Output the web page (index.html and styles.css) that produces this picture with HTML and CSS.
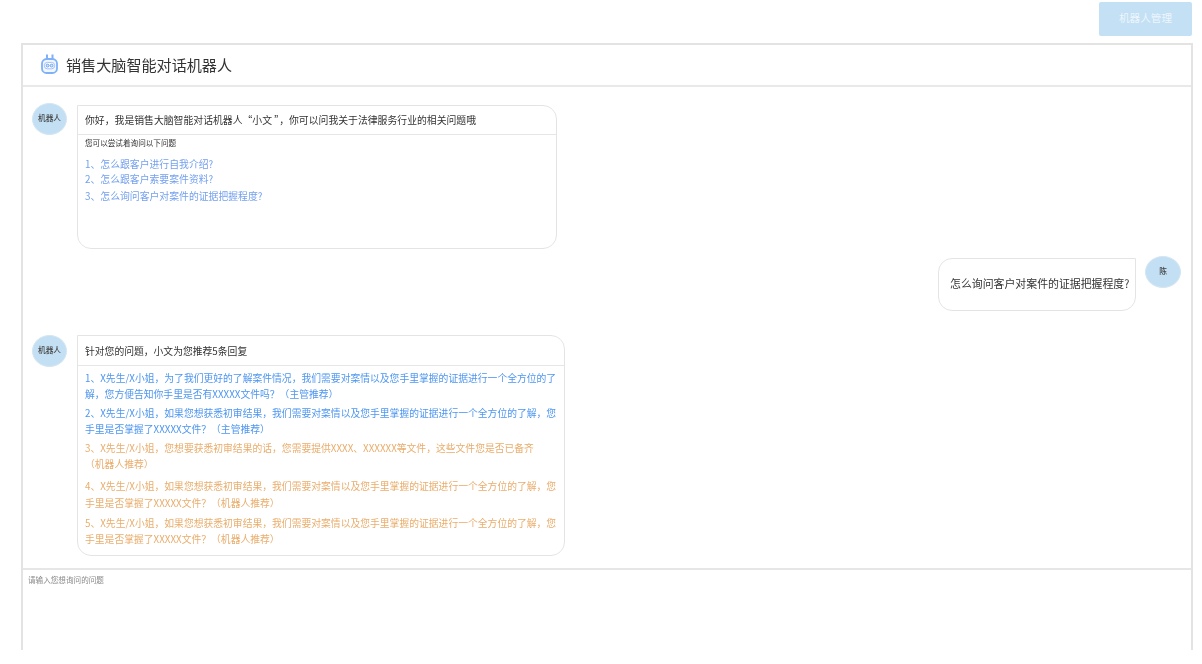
FILE: index.html
```html
<!DOCTYPE html>
<html lang="zh-CN">
<head>
<meta charset="utf-8">
<title>销售大脑智能对话机器人</title>
<link rel="stylesheet" href="styles.css">
</head>
<body>
<div class="page">
  <div class="topbar"><button class="manage">机器人管理</button></div>
  <section class="card">
    <header class="head">
      <svg class="logo" viewBox="0 0 17 21" width="17" height="21" fill="none" stroke="#7fb0f8" stroke-width="1.8">
        <rect x="1" y="6" width="15" height="14" rx="4.6" fill="#f2f7ff"/>
        <path d="M6 6V1.5M11.5 6V1.5" stroke-width="2"/>
        <rect x="3.4" y="9.4" width="10.2" height="6.4" rx="3" fill="#fff" stroke="#9cc2fa" stroke-width="1"/>
        <circle cx="6.6" cy="12.6" r="1.4" fill="#dbe9fd" stroke="#5f97f2" stroke-width=".9"/>
        <circle cx="10.6" cy="12.6" r="1.4" fill="#dbe9fd" stroke="#5f97f2" stroke-width=".9"/>
      </svg>
      <h1 class="title">销售大脑智能对话机器人</h1>
    </header>
    <div class="chat">
      <div class="row first">
        <div class="avatar">机器人</div>
        <div class="bubble welcome">
          <div class="bubble-head">你好，我是销售大脑智能对话机器人“小文 ”，你可以问我关于法律服务行业的相关问题哦</div>
          <div class="bubble-body">
            <p class="hint">您可以尝试着询问以下问题</p>
            <p class="q">1、怎么跟客户进行自我介绍?</p>
            <p class="q">2、怎么跟客户索要案件资料?</p>
            <p class="q q-last">3、怎么询问客户对案件的证据把握程度?</p>
          </div>
        </div>
      </div>
      <div class="row user">
        <div class="bubble mine">怎么询问客户对案件的证据把握程度?</div>
        <div class="avatar small">陈</div>
      </div>
      <div class="row third">
        <div class="avatar">机器人</div>
        <div class="bubble answer">
          <div class="bubble-head tall">针对您的问题，小文为您推荐5条回复</div>
          <div class="answer-body">
            <p class="a blue g1">1、X先生/X小姐，为了我们更好的了解案件情况，我们需要对案情以及您手里掌握的证据进行一个全方位的了解，您方便告知你手里是否有XXXXX文件吗？（主管推荐）</p>
            <p class="a blue g2">2、X先生/X小姐，如果您想获悉初审结果，我们需要对案情以及您手里掌握的证据进行一个全方位的了解，您手里是否掌握了XXXXX文件？（主管推荐）</p>
            <p class="a orange g3">3、X先生/X小姐，您想要获悉初审结果的话，您需要提供XXXX、XXXXXX等文件，这些文件您是否已备齐<br>（机器人推荐）</p>
            <p class="a orange g4">4、X先生/X小姐，如果您想获悉初审结果，我们需要对案情以及您手里掌握的证据进行一个全方位的了解，您手里是否掌握了XXXXX文件？（机器人推荐）</p>
            <p class="a orange">5、X先生/X小姐，如果您想获悉初审结果，我们需要对案情以及您手里掌握的证据进行一个全方位的了解，您手里是否掌握了XXXXX文件？（机器人推荐）</p>
          </div>
        </div>
      </div>
    </div>
    <div class="input">请输入您想询问的问题</div>
  </section>
</div>
</body>
</html>
```
FILE: styles.css
```css
* { box-sizing: border-box; }
html, body { margin: 0; height: 100%; background: #fff; overflow: hidden; }
body { font-family: "Noto Sans CJK SC", "Noto Sans", sans-serif; color: #333; }
p, h1 { margin: 0; font-weight: 400; }
.page { width: 1202px; height: 664px; padding: 2px 9px 14px 21px; display: flex; flex-direction: column; filter: blur(.5px); }
.topbar { display: flex; justify-content: flex-end; height: 41px; flex: none; }
.manage { width: 93px; height: 34px; margin-right: 1px; border: 0; border-radius: 2px; background: #c3e0f5; color: #eef6fc; font: 10.6px/32px "Noto Sans CJK SC", sans-serif; padding: 0 0 2px; }
.card { flex: 1; display: flex; flex-direction: column; border: solid #e3e3e3; border-width: 2px 2px 0 2px; }
.head { height: 42px; flex: none; display: flex; align-items: center; padding: 0 0 3px 18px; border-bottom: 2px solid #e9e9e9; }
.title { font-size: 15.1px; margin-left: 8px; color: #333; }
.chat { height: 481px; flex: none; padding: 16px 10px 0 9px; }
.row { display: flex; align-items: flex-start; }
.avatar { flex: none; width: 35px; height: 32px; border-radius: 50%; background: #c2dff3; border: 1px solid #d5e6f2; font-size: 7.7px; font-weight: 500; display: flex; align-items: center; justify-content: center; padding-bottom: 3px; color: #444; }
.avatar.small { width: 36px; margin-left: 9px; margin-top: -2px; }
.bubble { border: 1.5px solid #e4e4e4; border-radius: 0 14px 14px 14px; background: #fff; margin-left: 10px; }
.welcome { width: 480px; height: 144px; margin-top: 2px; }
.bubble-head { height: 29px; display: flex; align-items: center; padding-left: 7px; font-size: 9.85px; border-bottom: 1.5px solid #e6e6e6; white-space: nowrap; }
.bubble-body { padding: 2px 7px; }
.hint { font-size: 7.6px; line-height: 11px; margin-bottom: 9px; }
.q { font-size: 9.85px; line-height: 15px; color: #74a0ee; }
.q-last { margin-top: 2px; }
.user { justify-content: flex-end; margin-top: 9px; }
.mine { width: 198px; height: 53px; margin: 0; border-radius: 14px 0 14px 14px; display: flex; align-items: center; padding: 0 0 4px 11px; font-size: 10.9px; white-space: nowrap; }
.third { margin-top: 24px; }
.answer { width: 488px; height: 221px; }
.tall { height: 30px; font-size: 9.8px; }
.answer-body { padding: 4px 7px 0 7px; }
.a { font-size: 9.8px; line-height: 16.3px; }
.blue { color: #4e96f0; }
.orange { color: #e9ad6c; }
.g1 { margin-bottom: 2.5px; }
.g2 { margin-bottom: 2.5px; }
.g3 { margin-bottom: 5.5px; }
.g4 { margin-bottom: 4px; }
.input { flex: 1; border-top: 2px solid #e6e6e6; padding: 4px 5px; font-size: 7.6px; line-height: 11px; color: #8a8a8a; }
```
